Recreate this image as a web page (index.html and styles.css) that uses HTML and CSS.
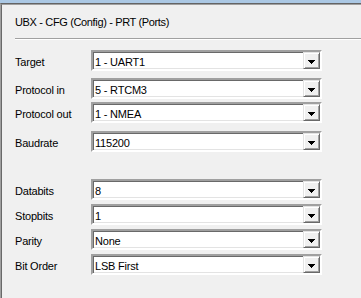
FILE: index.html
```html
<!DOCTYPE html>
<html>
<head>
<meta charset="utf-8">
<link rel="stylesheet" href="styles.css">
</head>
<body>
<div class="topbar"></div>
<div class="frame">
  <div class="pane">
    <div class="title">UBX - CFG (Config) - PRT (Ports)</div>
    <div class="sep"></div>
    <div class="form">
      <div class="row">
        <div class="label">Target</div>
        <div class="combo"><div class="value">1 - UART1</div><div class="btn"><svg width="7" height="4" viewBox="0 0 7 4"><rect x="0" y="0" width="7" height="1"/><rect x="1" y="1" width="5" height="1"/><rect x="2" y="2" width="3" height="1"/><rect x="3" y="3" width="1" height="1"/></svg></div></div>
      </div>
      <div class="row g7">
        <div class="label">Protocol in</div>
        <div class="combo"><div class="value">5 - RTCM3</div><div class="btn"><svg width="7" height="4" viewBox="0 0 7 4"><rect x="0" y="0" width="7" height="1"/><rect x="1" y="1" width="5" height="1"/><rect x="2" y="2" width="3" height="1"/><rect x="3" y="3" width="1" height="1"/></svg></div></div>
      </div>
      <div class="row g3">
        <div class="label">Protocol out</div>
        <div class="combo"><div class="value">1 - NMEA</div><div class="btn"><svg width="7" height="4" viewBox="0 0 7 4"><rect x="0" y="0" width="7" height="1"/><rect x="1" y="1" width="5" height="1"/><rect x="2" y="2" width="3" height="1"/><rect x="3" y="3" width="1" height="1"/></svg></div></div>
      </div>
      <div class="row g8">
        <div class="label">Baudrate</div>
        <div class="combo"><div class="value">115200</div><div class="btn"><svg width="7" height="4" viewBox="0 0 7 4"><rect x="0" y="0" width="7" height="1"/><rect x="1" y="1" width="5" height="1"/><rect x="2" y="2" width="3" height="1"/><rect x="3" y="3" width="1" height="1"/></svg></div></div>
      </div>
      <div class="row g27">
        <div class="label">Databits</div>
        <div class="combo"><div class="value">8</div><div class="btn"><svg width="7" height="4" viewBox="0 0 7 4"><rect x="0" y="0" width="7" height="1"/><rect x="1" y="1" width="5" height="1"/><rect x="2" y="2" width="3" height="1"/><rect x="3" y="3" width="1" height="1"/></svg></div></div>
      </div>
      <div class="row g4">
        <div class="label">Stopbits</div>
        <div class="combo"><div class="value">1</div><div class="btn"><svg width="7" height="4" viewBox="0 0 7 4"><rect x="0" y="0" width="7" height="1"/><rect x="1" y="1" width="5" height="1"/><rect x="2" y="2" width="3" height="1"/><rect x="3" y="3" width="1" height="1"/></svg></div></div>
      </div>
      <div class="row g4">
        <div class="label">Parity</div>
        <div class="combo"><div class="value">None</div><div class="btn"><svg width="7" height="4" viewBox="0 0 7 4"><rect x="0" y="0" width="7" height="1"/><rect x="1" y="1" width="5" height="1"/><rect x="2" y="2" width="3" height="1"/><rect x="3" y="3" width="1" height="1"/></svg></div></div>
      </div>
      <div class="row g4">
        <div class="label">Bit Order</div>
        <div class="combo"><div class="value">LSB First</div><div class="btn"><svg width="7" height="4" viewBox="0 0 7 4"><rect x="0" y="0" width="7" height="1"/><rect x="1" y="1" width="5" height="1"/><rect x="2" y="2" width="3" height="1"/><rect x="3" y="3" width="1" height="1"/></svg></div></div>
      </div>
    </div>
  </div>
</div>
</body>
</html>
```

FILE: styles.css
```css
* { box-sizing: border-box; }
html, body {
  margin: 0;
  padding: 0;
  width: 361px;
  height: 298px;
  overflow: hidden;
  background: #f0f0f0;
  font-family: "Liberation Sans", Arial, sans-serif;
  font-size: 11px;
  color: #000;
}
.topbar {
  height: 3px;
  background: #abc8e4;
}
.frame {
  height: 295px;
  border-top: 1px solid #646464;
  border-left: 1px solid #a0a0a0;
}
.pane {
  height: 294px;
  border-left: 1px solid #696969;
  border-top: 1px solid #a0a0a0;
}
.title {
  margin: 11px 0 0 13px;
  line-height: 13px;
  letter-spacing: -0.35px;
  white-space: nowrap;
}
.sep {
  margin: 9px 0 0 13px;
  height: 2px;
  border-top: 1px solid #a0a0a0;
  border-bottom: 1px solid #ffffff;
}
.form {
  margin: 10px 0 0 13px;
  display: flex;
  flex-direction: column;
}
.row {
  display: flex;
  align-items: flex-start;
  height: 21px;
}
.g3 { margin-top: 3px; }
.g4 { margin-top: 4px; }
.g7 { margin-top: 7px; }
.g8 { margin-top: 8px; }
.g27 { margin-top: 27px; }
.label {
  width: 76px;
  padding-top: 6px;
  line-height: 13px;
  letter-spacing: -0.2px;
  white-space: nowrap;
}
.combo {
  width: 231px;
  height: 21px;
  display: flex;
  background: #fff;
  border: 2px solid;
  border-color: #a0a0a0 #ffffff #ffffff #a0a0a0;
  box-shadow: inset 1px 1px 0 #696969, inset -1px -1px 0 #e3e3e3;
}
.value {
  flex: 1;
  padding: 4px 0 0 2px;
  line-height: 13px;
  letter-spacing: -0.2px;
  white-space: nowrap;
}
.btn {
  width: 17px;
  height: 17px;
  display: flex;
  justify-content: center;
  align-items: flex-start;
  background: #f0f0f0;
  border: 1px solid;
  border-color: #e3e3e3 #696969 #696969 #e3e3e3;
  box-shadow: inset 1px 1px 0 #ffffff, inset -1px -1px 0 #a0a0a0;
}
.btn svg {
  display: block;
  margin-top: 7px;
  fill: #000;
}
```
